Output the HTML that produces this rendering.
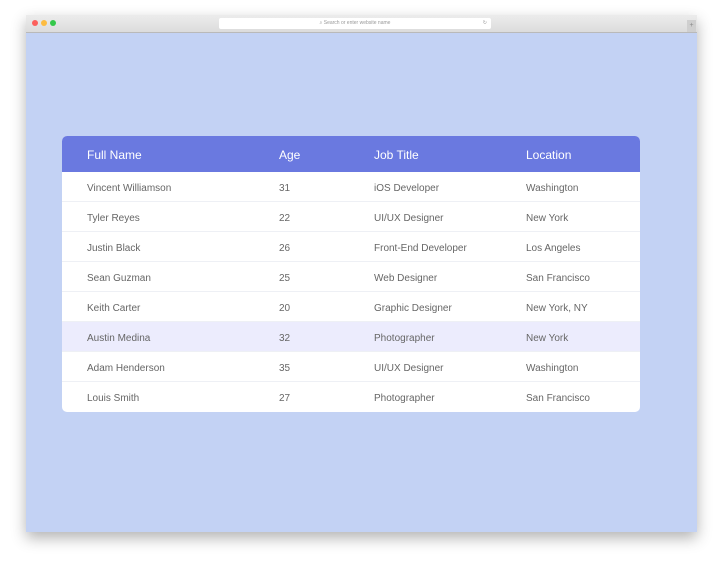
<!DOCTYPE html>
<html><head><style>
body{margin:0;width:723px;height:569px;background:#fff;position:relative;overflow:hidden;font-family:"Liberation Sans",sans-serif;}
.win{position:absolute;left:26px;top:15px;width:671px;height:517px;background:#c3d2f4;box-shadow:0 6px 14px rgba(0,0,0,.3);}
.bar{position:absolute;left:0;top:0;width:671px;height:17px;background:linear-gradient(#ececec,#dcdcdc);border-bottom:1px solid #b9b9b9;}
.dot{position:absolute;top:5px;width:6px;height:6px;border-radius:50%;}
.url{position:absolute;left:193px;top:3px;width:272px;height:11px;background:#fff;border-radius:2px;font-size:5px;color:#999;text-align:center;line-height:11px;}
.plus{position:absolute;right:1px;top:5px;width:9px;height:12px;background:#cfcfcf;font-size:7px;color:#888;text-align:center;line-height:12px;}
.tbl{position:absolute;left:62px;top:136px;width:578px;height:276px;background:#fff;border-radius:5px;overflow:hidden;}
.hd{height:36px;background:#6a79e0;color:#fff;font-size:12px;position:relative;}
.row{height:30px;border-bottom:1px solid #eef0f5;position:relative;color:#666;font-size:10px;box-sizing:border-box;}
.row.hl{background:#ececfd;}
.c{position:absolute;top:2px;line-height:30px;white-space:nowrap;}
.hd .c{line-height:37px;top:1px;}
.c1{left:25px}.c2{left:217px}.c3{left:312px}.c4{left:464px}
</style></head><body>
<div class="win">
<div class="bar">
<div class="dot" style="left:6px;background:#fc605c"></div>
<div class="dot" style="left:15px;background:#fdbc40"></div>
<div class="dot" style="left:24px;background:#34c84a"></div>
<div class="url">⌕ Search or enter website name<span style="position:absolute;right:4px">↻</span></div>
<div class="plus">+</div>
</div>
</div>
<div class="tbl">
<div class="hd"><span class="c c1">Full Name</span><span class="c c2">Age</span><span class="c c3">Job Title</span><span class="c c4">Location</span></div>
<div class="row"><span class="c c1">Vincent Williamson</span><span class="c c2">31</span><span class="c c3">iOS Developer</span><span class="c c4">Washington</span></div>
<div class="row"><span class="c c1">Tyler Reyes</span><span class="c c2">22</span><span class="c c3">UI/UX Designer</span><span class="c c4">New York</span></div>
<div class="row"><span class="c c1">Justin Black</span><span class="c c2">26</span><span class="c c3">Front-End Developer</span><span class="c c4">Los Angeles</span></div>
<div class="row"><span class="c c1">Sean Guzman</span><span class="c c2">25</span><span class="c c3">Web Designer</span><span class="c c4">San Francisco</span></div>
<div class="row"><span class="c c1">Keith Carter</span><span class="c c2">20</span><span class="c c3">Graphic Designer</span><span class="c c4">New York, NY</span></div>
<div class="row hl"><span class="c c1">Austin Medina</span><span class="c c2">32</span><span class="c c3">Photographer</span><span class="c c4">New York</span></div>
<div class="row"><span class="c c1">Adam Henderson</span><span class="c c2">35</span><span class="c c3">UI/UX Designer</span><span class="c c4">Washington</span></div>
<div class="row" style="border:none"><span class="c c1">Louis Smith</span><span class="c c2">27</span><span class="c c3">Photographer</span><span class="c c4">San Francisco</span></div>
</div>
</body></html>
